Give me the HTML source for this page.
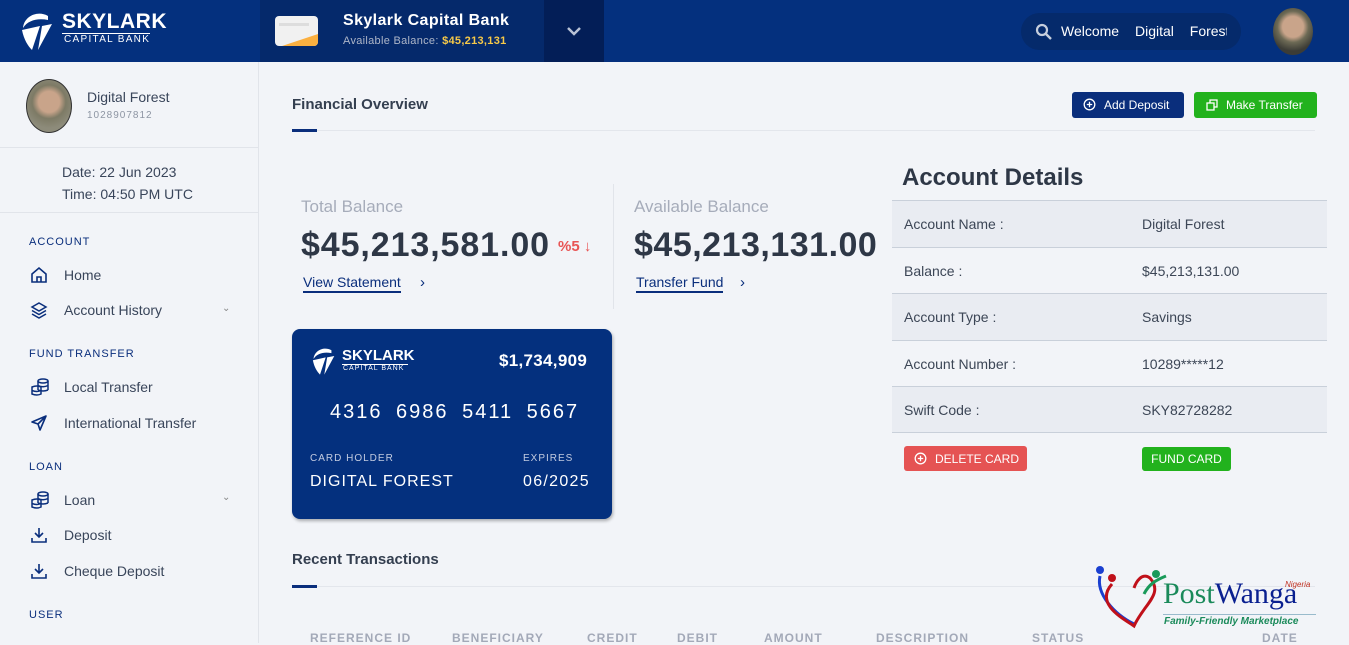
<!DOCTYPE html>
<html><head><meta charset="utf-8"><style>
*{margin:0;padding:0;box-sizing:border-box}
body{width:1349px;height:643px;overflow:hidden;background:#f2f4f8;font-family:"Liberation Sans",sans-serif;color:#333e4f;position:relative}
.a{position:absolute}
.hdr{left:0;top:0;width:1349px;height:62px;background:#04307e}
.sb{left:0;top:62px;width:259px;height:581px;border-right:1px solid #e1e4ea}
.sec{font-size:11px;letter-spacing:1px;color:#0a2e7c;left:29px}
.it{left:64px;font-size:14px;color:#39455a}
.ic{left:30px;width:18px;height:18px}
.th{font-size:12px;color:#a3a9b8;letter-spacing:1px;font-weight:bold;top:631px}
.row{left:892px;width:435px;height:47px;border-top:1px solid #c9d0da;font-size:14px;color:#3c4656}
.row span{position:absolute;top:15px}
</style></head><body>
<div class="a hdr"></div>
<svg class="a" style="left:18px;top:10px" width="42" height="42" viewBox="0 0 42 42"><path d="M30 6 C20 0 6 6 5 18 C10 10 20 8 30 10Z" fill="#fff"/><path d="M4 20 L22 16 L14 40 C10 36 6 30 4 20Z M24 16 L34 14 L20 40Z" fill="#fff"/></svg>
<div class="a" style="left:62px;top:10px;color:#fff;font-size:21px;font-weight:bold;letter-spacing:0.5px">SKYLARK</div>
<div class="a" style="left:62px;top:33px;width:88px;border-top:1px solid #fff"></div>
<div class="a" style="left:64px;top:34px;color:#fff;font-size:10px;letter-spacing:1.3px">CAPITAL BANK</div>
<div class="a" style="left:260px;top:0;width:284px;height:62px;background:#05296b"></div>
<div class="a" style="left:544px;top:0;width:60px;height:62px;background:#031e57"></div>
<div class="a" style="left:275px;top:16px;width:43px;height:30px;border-radius:4px;background:#f1f1f1;overflow:hidden"><div class="a" style="left:4px;top:7px;width:30px;height:3px;background:#ddd"></div><div class="a" style="right:0;bottom:0;width:0;height:0;border-left:36px solid transparent;border-bottom:12px solid #fbb040"></div></div>
<div class="a" style="left:343px;top:12px;color:#fff;font-size:16px;font-weight:bold;letter-spacing:0.4px">Skylark Capital Bank</div>
<div class="a" style="left:343px;top:35px;color:#aeb6c8;font-size:11px;letter-spacing:0.3px">Available Balance: <b style="color:#f7c948">$45,213,131</b></div>
<svg class="a" style="left:566px;top:25px" width="16" height="12"><path d="M2 3 L8 9 L14 3" stroke="#b9c2d6" stroke-width="2.5" fill="none"/></svg>
<div class="a" style="left:1021px;top:13px;width:220px;height:37px;border-radius:19px;background:#052a6b"></div>
<svg class="a" style="left:1035px;top:23px" width="18" height="18"><circle cx="7" cy="7" r="5" stroke="#c6cedd" stroke-width="2.2" fill="none"/><path d="M11 11 L16 16" stroke="#c6cedd" stroke-width="2.4"/></svg>
<div class="a" style="left:1061px;top:23px;color:#fff;font-size:14px;word-spacing:12px;width:166px;overflow:hidden;white-space:nowrap">Welcome Digital Forest</div>
<div class="a" style="left:1273px;top:8px;width:40px;height:47px;border-radius:50%;background:radial-gradient(circle at 50% 40%,#c9a48a 0 30%,#6d6a55 45%,#3c3c36 70%)"></div>

<div class="a sb"></div>
<div class="a" style="left:26px;top:79px;width:46px;height:54px;border-radius:50%;border:1.5px solid #333;background:radial-gradient(circle at 50% 42%,#c9a48a 0 28%,#7d7a65 45%,#8d8b7a 70%)"></div>
<div class="a" style="left:87px;top:89px;font-size:14px;color:#39455a">Digital Forest</div>
<div class="a" style="left:87px;top:110px;font-size:10px;color:#8d95a3;letter-spacing:1px">1028907812</div>
<div class="a" style="left:0;top:147px;width:259px;border-top:1px solid #e1e4ea"></div>
<div class="a" style="left:62px;top:161px;font-size:14px;color:#39455a;line-height:22px">Date: 22 Jun 2023<br>Time: 04:50 PM UTC</div>
<div class="a" style="left:0;top:212px;width:259px;border-top:1px solid #e1e4ea"></div>
<div class="a sec" style="top:236px">ACCOUNT</div>
<svg class="a ic" style="top:266px" viewBox="0 0 18 18"><path d="M2 8 L9 2 L16 8 V16 H2Z M7 16 V11 H11 V16" stroke="#0a2e7c" stroke-width="1.6" fill="none"/></svg>
<div class="a it" style="top:267px">Home</div>
<svg class="a ic" style="top:301px" viewBox="0 0 18 18"><path d="M9 2 L16 6 L9 10 L2 6Z M2 9.5 L9 13.5 L16 9.5 M2 13 L9 17 L16 13" stroke="#0a2e7c" stroke-width="1.5" fill="none"/></svg>
<div class="a it" style="top:302px">Account History</div>
<div class="a" style="left:222px;top:303px;font-size:10px;color:#888">&#8964;</div>
<div class="a sec" style="top:348px">FUND TRANSFER</div>
<svg class="a ic" style="top:378px;width:20px" viewBox="0 0 20 18"><ellipse cx="13" cy="3" rx="5" ry="2" stroke="#0a2e7c" stroke-width="1.5" fill="none"/><path d="M8 3V12 M18 3V12 M8 7.5 Q13 10 18 7.5 M8 12 Q13 14 18 12" stroke="#0a2e7c" stroke-width="1.5" fill="none"/><path d="M2 9 Q7 7 11 9 V16 Q7 18 2 16Z M2 12.5 Q7 14.5 11 12.5" stroke="#0a2e7c" stroke-width="1.5" fill="none"/></svg>
<div class="a it" style="top:379px">Local Transfer</div>
<svg class="a ic" style="top:414px" viewBox="0 0 18 18"><path d="M16 2 L2 8 L8 10 L10 16Z M8 10 L16 2" stroke="#0a2e7c" stroke-width="1.6" fill="none" stroke-linejoin="round"/></svg>
<div class="a it" style="top:415px">International Transfer</div>
<div class="a sec" style="top:461px">LOAN</div>
<svg class="a ic" style="top:491px;width:20px" viewBox="0 0 20 18"><ellipse cx="13" cy="3" rx="5" ry="2" stroke="#0a2e7c" stroke-width="1.5" fill="none"/><path d="M8 3V12 M18 3V12 M8 7.5 Q13 10 18 7.5 M8 12 Q13 14 18 12" stroke="#0a2e7c" stroke-width="1.5" fill="none"/><path d="M2 9 Q7 7 11 9 V16 Q7 18 2 16Z M2 12.5 Q7 14.5 11 12.5" stroke="#0a2e7c" stroke-width="1.5" fill="none"/></svg>
<div class="a it" style="top:492px">Loan</div>
<div class="a" style="left:222px;top:492px;font-size:10px;color:#888">&#8964;</div>
<svg class="a ic" style="top:526px" viewBox="0 0 18 18"><path d="M9 2V11 M5 7 L9 11 L13 7 M2 12V16H16V12" stroke="#0a2e7c" stroke-width="1.6" fill="none"/></svg>
<div class="a it" style="top:527px">Deposit</div>
<svg class="a ic" style="top:562px" viewBox="0 0 18 18"><path d="M9 2V11 M5 7 L9 11 L13 7 M2 12V16H16V12" stroke="#0a2e7c" stroke-width="1.6" fill="none"/></svg>
<div class="a it" style="top:563px">Cheque Deposit</div>
<div class="a sec" style="top:609px">USER</div>

<div class="a" style="left:292px;top:96px;font-size:15px;font-weight:bold;color:#343f50">Financial Overview</div>
<div class="a" style="left:292px;top:130px;width:1023px;border-top:1px solid #e3e6ec"></div>
<div class="a" style="left:292px;top:129px;width:25px;height:3px;background:#0a2e7c"></div>
<div class="a" style="left:1072px;top:92px;width:112px;height:26px;border-radius:3px;background:#0a2e7c;color:#fff;font-size:12px;line-height:26px;padding-left:32px">Add Deposit</div>
<svg class="a" style="left:1083px;top:98px" width="13" height="13"><circle cx="6.5" cy="6.5" r="5.3" stroke="#fff" stroke-width="1.3" fill="none"/><path d="M6.5 3.8V9.2M3.8 6.5H9.2" stroke="#fff" stroke-width="1.3"/></svg>
<div class="a" style="left:1194px;top:92px;width:123px;height:26px;border-radius:3px;background:#22b21d;color:#fff;font-size:12px;line-height:26px;padding-left:32px">Make Transfer</div>
<svg class="a" style="left:1206px;top:99px" width="12" height="12"><rect x="4" y="1" width="7" height="7" stroke="#fff" stroke-width="1.3" fill="none"/><rect x="1" y="4" width="7" height="7" stroke="#fff" stroke-width="1.3" fill="#22b21d"/></svg>

<div class="a" style="left:613px;top:184px;height:125px;border-left:1px solid #e1e4ea"></div>
<div class="a" style="left:301px;top:197px;font-size:17px;color:#a6acba">Total Balance</div>
<div class="a" style="left:301px;top:226px;font-size:34px;font-weight:bold;color:#2e3746;letter-spacing:0.9px">$45,213,581.00</div>
<div class="a" style="left:558px;top:238px;font-size:15px;font-weight:bold;color:#e85454">%5 <span style="font-weight:normal">&#8595;</span></div>
<div class="a" style="left:303px;top:274px;font-size:14px;color:#0a2e7c;border-bottom:2px solid #0a2e7c;padding-bottom:1px">View Statement</div>
<div class="a" style="left:420px;top:274px;font-size:15px;color:#0a2e7c">&#8250;</div>
<div class="a" style="left:634px;top:197px;font-size:17px;color:#a6acba">Available Balance</div>
<div class="a" style="left:634px;top:226px;font-size:34px;font-weight:bold;color:#2e3746;letter-spacing:0.5px">$45,213,131.00</div>
<div class="a" style="left:636px;top:274px;font-size:14px;color:#0a2e7c;border-bottom:2px solid #0a2e7c;padding-bottom:1px">Transfer Fund</div>
<div class="a" style="left:740px;top:274px;font-size:15px;color:#0a2e7c">&#8250;</div>

<div class="a" style="left:292px;top:329px;width:320px;height:190px;border-radius:8px;background:#04307e;box-shadow:1px 2px 3px rgba(0,0,0,.3)"></div>
<svg class="a" style="left:310px;top:346px" width="30" height="30" viewBox="0 0 42 42"><path d="M30 6 C20 0 6 6 5 18 C10 10 20 8 30 10Z" fill="#fff"/><path d="M4 20 L22 16 L14 40 C10 36 6 30 4 20Z M24 16 L34 14 L20 40Z" fill="#fff"/></svg>
<div class="a" style="left:342px;top:347px;color:#fff;font-size:15px;font-weight:bold">SKYLARK</div>
<div class="a" style="left:342px;top:364px;width:66px;border-top:1px solid #fff"></div>
<div class="a" style="left:343px;top:365px;color:#fff;font-size:7px;letter-spacing:1px">CAPITAL BANK</div>
<div class="a" style="left:499px;top:351px;color:#fff;font-size:17px;font-weight:bold;letter-spacing:0.3px">$1,734,909</div>
<div class="a" style="left:330px;top:401px;color:#fff;font-size:20px;letter-spacing:2px;word-spacing:6px">4316 6986 5411 5667</div>
<div class="a" style="left:310px;top:453px;color:#c3cbe0;font-size:10px;letter-spacing:1px">CARD HOLDER</div>
<div class="a" style="left:523px;top:453px;color:#c3cbe0;font-size:10px;letter-spacing:1px">EXPIRES</div>
<div class="a" style="left:310px;top:473px;color:#fff;font-size:16px;letter-spacing:1px">DIGITAL FOREST</div>
<div class="a" style="left:523px;top:473px;color:#fff;font-size:16px;letter-spacing:1.3px">06/2025</div>

<div class="a" style="left:902px;top:164px;font-size:24px;font-weight:bold;color:#2e3746">Account Details</div>
<div class="a row" style="top:200px;background:#e9ecf2"><span style="left:12px">Account Name :</span><span style="left:250px">Digital Forest</span></div>
<div class="a row" style="top:247px"><span style="left:12px">Balance :</span><span style="left:250px">$45,213,131.00</span></div>
<div class="a row" style="top:293px;background:#e9ecf2"><span style="left:12px">Account Type :</span><span style="left:250px">Savings</span></div>
<div class="a row" style="top:340px"><span style="left:12px">Account Number :</span><span style="left:250px">10289*****12</span></div>
<div class="a row" style="top:386px;background:#e9ecf2;border-bottom:1px solid #c9d0da"><span style="left:12px">Swift Code :</span><span style="left:250px">SKY82728282</span></div>
<div class="a" style="left:904px;top:446px;width:123px;height:25px;border-radius:3px;background:#e55353;color:#fff;font-size:12px;line-height:26px;padding-left:31px">DELETE CARD</div>
<svg class="a" style="left:914px;top:452px" width="13" height="13"><circle cx="6.5" cy="6.5" r="5.3" stroke="#fff" stroke-width="1.3" fill="none"/><path d="M6.5 3.8V9.2M3.8 6.5H9.2" stroke="#fff" stroke-width="1.3"/></svg>
<div class="a" style="left:1142px;top:447px;width:89px;height:24px;border-radius:3px;background:#22b21d;color:#fff;font-size:12px;line-height:24px;text-align:center">FUND CARD</div>

<div class="a" style="left:292px;top:551px;font-size:15px;font-weight:bold;color:#343f50">Recent Transactions</div>
<div class="a" style="left:292px;top:586px;width:1023px;border-top:1px solid #e3e6ec"></div>
<div class="a" style="left:292px;top:585px;width:25px;height:3px;background:#0a2e7c"></div>
<div class="a th" style="left:310px">REFERENCE ID</div>
<div class="a th" style="left:452px">BENEFICIARY</div>
<div class="a th" style="left:587px">CREDIT</div>
<div class="a th" style="left:677px">DEBIT</div>
<div class="a th" style="left:764px">AMOUNT</div>
<div class="a th" style="left:876px">DESCRIPTION</div>
<div class="a th" style="left:1032px">STATUS</div>
<div class="a th" style="left:1262px">DATE</div>

<svg class="a" style="left:1094px;top:564px" width="80" height="70"><circle cx="6" cy="6" r="4" fill="#1a3fd0"/><path d="M6 12 C2 30 20 50 40 60" stroke="#1a3fd0" stroke-width="3" fill="none"/><circle cx="18" cy="14" r="4" fill="#c0101a"/><path d="M18 20 C0 40 30 55 40 62 C50 40 70 30 56 14 C48 8 42 18 40 24" stroke="#c0101a" stroke-width="3" fill="none"/><circle cx="62" cy="10" r="4" fill="#1a9a5a"/><path d="M50 30 C55 20 62 16 72 12" stroke="#1a9a5a" stroke-width="3" fill="none"/></svg>
<div class="a" style="left:1163px;top:577px;font-family:'Liberation Serif',serif;font-size:30px;color:#1a8a5a">Post<span style="color:#0a2090">Wanga</span></div>
<div class="a" style="left:1285px;top:580px;font-size:8px;color:#c03020;font-style:italic">Nigeria</div>
<div class="a" style="left:1163px;top:614px;width:153px;border-top:1px solid #9bc;"></div>
<div class="a" style="left:1164px;top:616px;font-size:10px;color:#1a8a5a;font-style:italic;font-weight:bold">Family-Friendly Marketplace</div>
</body></html>
